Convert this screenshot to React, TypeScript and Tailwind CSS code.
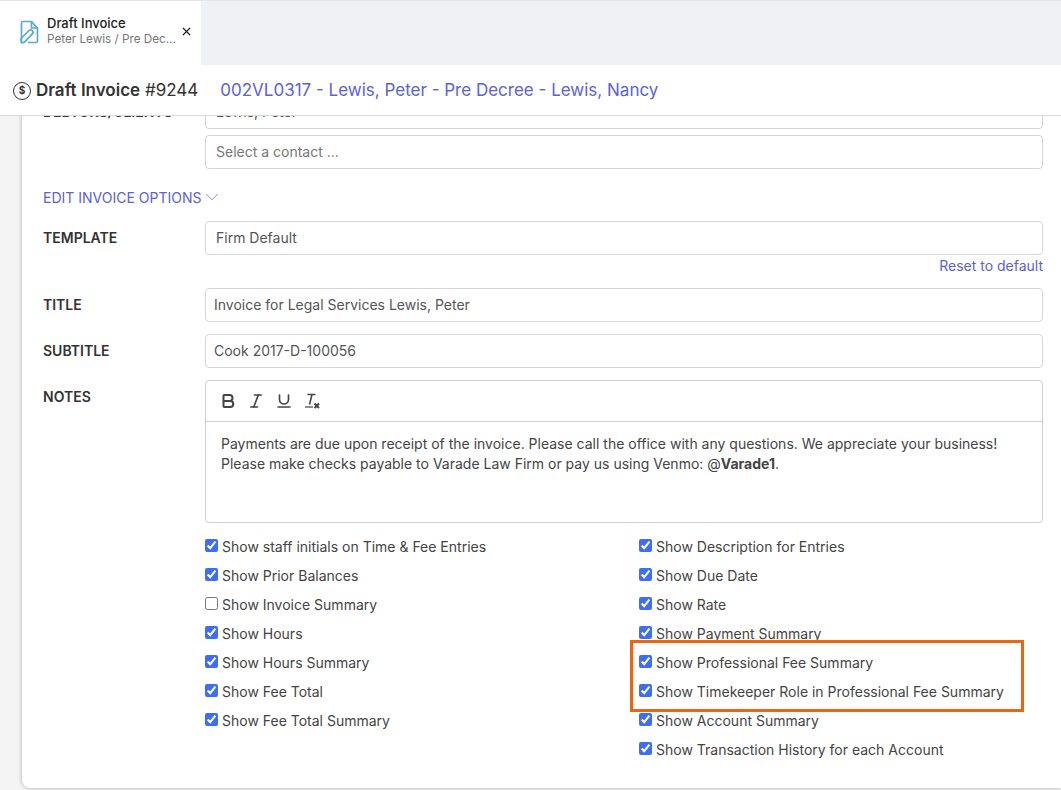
import React from 'react';
import { X, ChevronDown, Bold, Italic, Underline } from 'lucide-react';

const leftOptions = [
  { label: 'Show staff initials on Time & Fee Entries', checked: true },
  { label: 'Show Prior Balances', checked: true },
  { label: 'Show Invoice Summary', checked: false },
  { label: 'Show Hours', checked: true },
  { label: 'Show Hours Summary', checked: true },
  { label: 'Show Fee Total', checked: true },
  { label: 'Show Fee Total Summary', checked: true },
];

const rightOptions = [
  { label: 'Show Description for Entries', checked: true },
  { label: 'Show Due Date', checked: true },
  { label: 'Show Rate', checked: true },
  { label: 'Show Payment Summary', checked: true },
  { label: 'Show Professional Fee Summary', checked: true },
  { label: 'Show Timekeeper Role in Professional Fee Summary', checked: true },
  { label: 'Show Account Summary', checked: true },
  { label: 'Show Transaction History for each Account', checked: true },
];

const InvoiceIcon = () => (
  <svg width="20" height="24" viewBox="0 0 20 24" fill="none" stroke="#5aa9c8" strokeWidth="1.7" strokeLinejoin="round" className="mb-[2px] shrink-0">
    <path d="M2.5 21V3a1.5 1.5 0 0 1 1.5-1.5h8.5L18.5 8v13a1.5 1.5 0 0 1-1.5 1.5H9" />
    <path d="M12.5 1.5V8h6" />
    <path d="M2.5 22.8 2 18.5l8-8a2.3 2.3 0 0 1 3.3 3.3l-7.8 8.3z" />
  </svg>
);

const ClearFormat = () => (
  <svg width="18" height="18" viewBox="0 0 18 18" fill="none" stroke="#444" strokeWidth="1.6">
    <path d="M4.5 2.5h8M9 2.5 6.5 12.5" />
    <path d="M2 15h8" strokeWidth="1.2" />
    <path d="M11.5 11.5l4.5 4.5M16 11.5 11.5 16" strokeWidth="2.1" />
  </svg>
);

const Option = ({ label, checked }: { label: string; checked: boolean }) => (
  <label className="flex h-[29px] items-center gap-1">
    <input type="checkbox" defaultChecked={checked} className="m-0 mb-[2px] h-[13px] w-[13px] accent-[#3d6ef5]" />
    <span className="text-[14px] text-[#444]">{label}</span>
  </label>
);

const Field = ({ label, value, className = '', inputClass = 'px-2' }: { label: string; value: string; className?: string; inputClass?: string }) => (
  <div className={`flex ${className}`}>
    <div className="w-[162px] pt-[6px] text-[14px] font-semibold text-[#333]">{label}</div>
    <div className={`flex h-[34px] flex-1 items-center rounded border border-[#d5d5d5] pb-[2px] text-[14px] text-[#555] ${inputClass}`}>{value}</div>
  </div>
);

export default function App() {
  return (
    <div className="flex h-[790px] w-[1061px] flex-col overflow-hidden bg-[#f4f4f4] font-['Inter',sans-serif]">
      <div className="flex h-[65px] shrink-0 border-t border-[#e2e4ea] bg-[#f0f1f5]">
        <div className="flex w-[201px] items-center bg-white pl-[19px]">
          <InvoiceIcon />
          <div className="ml-[8px] w-[133px] shrink-0 pb-[4px]">
            <div className="text-[13px] leading-[16px] font-medium text-[#222]">Draft Invoice</div>
            <div className="text-[11.7px] leading-[16px] whitespace-nowrap text-[#777]">Peter Lewis / Pre Dec...</div>
          </div>
          <X size={13} strokeWidth={2.2} className="mb-[4px] shrink-0 text-[#222]" />
        </div>
      </div>

      <div className="z-10 flex h-[51px] shrink-0 items-center border-b border-[#d9d9d9] bg-white pt-[1px] pl-[13px]">
        <div className="flex h-[18px] w-[18px] items-center justify-center rounded-full border-[1.5px] border-[#333] text-[10px] font-bold text-[#333]">$</div>
        <div className="ml-[5px] text-[17px] text-[#333]">
          <span className="font-semibold">Draft Invoice</span> #9244
        </div>
        <a className="ml-[22px] text-[17px] text-[#5b62d8]">002VL0317 - Lewis, Peter - Pre Decree - Lewis, Nancy</a>
      </div>

      <div className="min-h-0 flex-1 pl-[22px]">
        <div className="-mt-[21px] h-[693px] rounded-bl-lg bg-white pr-[18px] pl-[21px] shadow-[0_0_4px_rgba(0,0,0,0.3)]">
          <div className="flex">
            <div className="w-[162px] pt-[6px] text-[14px] font-semibold text-[#333]">DEBTORS/CLIENTS</div>
            <div className="flex h-[34px] flex-1 items-center justify-between rounded border border-[#d5d5d5] pr-[11px] pb-[2px] pl-[10px] text-[14px] text-[#555]">
              Lewis, Peter
              <X size={11} className="text-[#555]" />
            </div>
          </div>
          <div className="mt-[6px] ml-[162px] flex h-[34px] items-center rounded border border-[#d5d5d5] px-[10px] pb-[2px] text-[14px] text-[#777]">
            Select a contact ...
          </div>

          <div className="mt-[19px] flex h-[18px] items-center text-[14px] text-[#5b62d8]">
            EDIT INVOICE OPTIONS
            <ChevronDown size={22} strokeWidth={0.9} className="text-[#6b70d8]" />
          </div>

          <Field label="TEMPLATE" value="Firm Default" className="mt-[15px]" inputClass="px-[10px]" />
          <div className="mt-[1px] h-[20px] text-right text-[14px] leading-[20px] text-[#5b62d8]">Reset to default</div>
          <Field label="TITLE" value="Invoice for Legal Services Lewis, Peter" className="mt-[12px]" />
          <Field label="SUBTITLE" value="Cook 2017-D-100056" className="mt-[12px]" />

          <div className="mt-[12px] flex">
            <div className="w-[162px] pt-[6px] text-[14px] font-semibold text-[#333]">NOTES</div>
            <div className="h-[143px] flex-1 rounded-sm border border-[#d0d0d0]">
              <div className="flex h-[41px] items-center gap-[10px] border-b border-[#d0d0d0] pl-[13px] text-[#444]">
                <Bold size={18} strokeWidth={2.7} />
                <Italic size={18} strokeWidth={2.2} />
                <Underline size={18} strokeWidth={2.2} />
                <ClearFormat />
              </div>
              <div className="px-[15px] pt-[12px] text-[14px] leading-[20px] text-[#444]">
                <p>Payments are due upon receipt of the invoice. Please call the office with any questions. We appreciate your business!</p>
                <p>Please make checks payable to Varade Law Firm or pay us using Venmo: @<strong>Varade1</strong>.</p>
              </div>
            </div>
          </div>

          <div className="relative mt-[9px] ml-[162px] grid grid-cols-[434px_1fr]">
            <div>
              {leftOptions.map((o) => (
                <Option key={o.label} label={o.label} checked={o.checked} />
              ))}
            </div>
            <div>
              {rightOptions.map((o) => (
                <Option key={o.label} label={o.label} checked={o.checked} />
              ))}
            </div>
            <div className="pointer-events-none absolute top-[108px] left-[425px] h-[72px] w-[394px] border-[3px] border-[#f0640f]" />
          </div>
        </div>
      </div>
    </div>
  );
}
